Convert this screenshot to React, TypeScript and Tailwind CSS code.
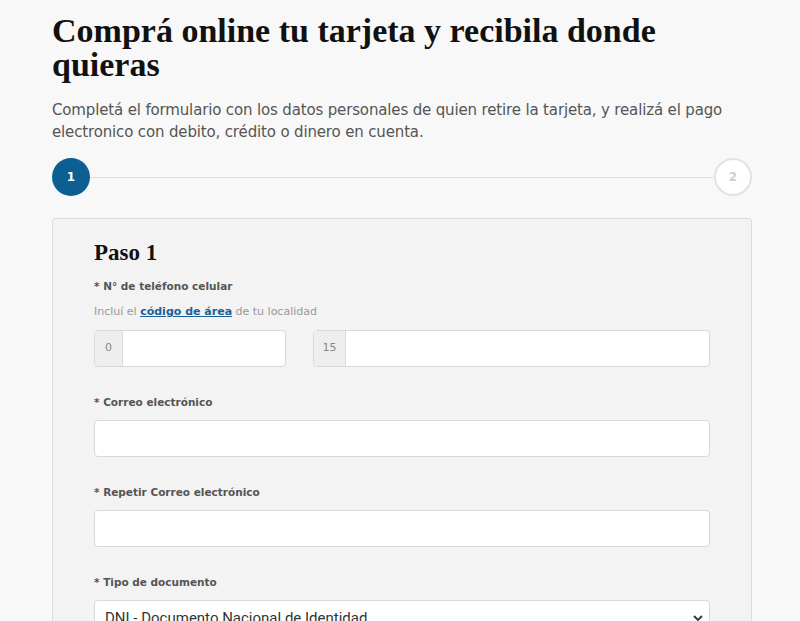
export default function App() {
  const sans = { fontFamily: '"DejaVu Sans", "Open Sans", sans-serif' };
  return (
    <div className="h-[621px] overflow-hidden bg-[#f8f8f8] pl-[52px] pr-[48px] pt-[14px]" style={sans}>
      <h1 className="max-w-[640px] text-[34px] leading-[34px] font-bold text-[#111] [font-family:'Liberation_Serif',serif]">
        Comprá online tu tarjeta y recibila donde quieras
      </h1>
      <p className="mt-[17px] text-[15px] leading-[22px] tracking-[-0.15px] text-[#555]">
        Completá el formulario con los datos personales de quien retire la tarjeta, y realizá el pago
        electronico con debito, crédito o dinero en cuenta.
      </p>

      <div className="mt-[15px] flex items-center">
        <div className="flex h-[38px] w-[38px] shrink-0 items-center justify-center rounded-full bg-[#0d5f92] text-[12px] font-bold text-white">
          1
        </div>
        <div className="h-px flex-1 bg-[#dedede]" />
        <div className="flex h-[38px] w-[38px] shrink-0 items-center justify-center rounded-full border-2 border-[#e2e2e2] bg-white text-[12px] font-bold text-[#cfcfcf]">
          2
        </div>
      </div>

      <div className="mt-[22px] rounded-[3px] border border-[#dcdcdc] bg-[#f3f3f3] px-[41px] pt-[20px] pb-10">
        <h2 className="text-[23px] leading-[28px] font-bold text-[#111] [font-family:'Liberation_Serif',serif]">
          Paso 1
        </h2>
        <div className="mt-[11px] text-[10.5px] leading-[16px] font-bold text-[#555]">* N° de teléfono celular</div>
        <div className="mt-[10px] text-[11px] leading-[16px] text-[#999]">
          Incluí el <span className="font-semibold text-[#1f5f97] underline">código de área</span> de tu localidad
        </div>
        <div className="mt-[10px] flex gap-[27px]">
          <div className="flex h-[37px] w-[192px] overflow-hidden rounded-[4px] border border-[#d9d9d9] bg-white">
            <div className="flex w-[28px] items-center justify-center border-r border-[#dcdcdc] bg-[#eeeeee] text-[11px] text-[#888]">0</div>
            <div className="flex-1" />
          </div>
          <div className="flex h-[37px] flex-1 overflow-hidden rounded-[4px] border border-[#d9d9d9] bg-white">
            <div className="flex w-[32px] items-center justify-center border-r border-[#dcdcdc] bg-[#eeeeee] text-[11px] text-[#888]">15</div>
            <div className="flex-1" />
          </div>
        </div>

        <div className="mt-[27px] text-[10.5px] leading-[16px] font-bold text-[#555]">* Correo electrónico</div>
        <div className="mt-[10px] h-[37px] rounded-[4px] border border-[#d9d9d9] bg-white" />

        <div className="mt-[27px] text-[10.5px] leading-[16px] font-bold text-[#555]">* Repetir Correo electrónico</div>
        <div className="mt-[10px] h-[37px] rounded-[4px] border border-[#d9d9d9] bg-white" />

        <div className="mt-[27px] text-[10.5px] leading-[16px] font-bold text-[#555]">* Tipo de documento</div>
        <div className="mt-[10px] flex h-[37px] items-center justify-between rounded-[4px] border border-[#d9d9d9] bg-white pl-[10px] pr-[6px] text-[15px] text-[#333] [font-family:Roboto,sans-serif]">
          <span>DNI - Documento Nacional de Identidad</span>
          <svg width="10" height="7" viewBox="0 0 10 7">
            <path d="M1 1l4 4 4-4" fill="none" stroke="#333" strokeWidth="1.8" />
          </svg>
        </div>
      </div>
    </div>
  );
}
